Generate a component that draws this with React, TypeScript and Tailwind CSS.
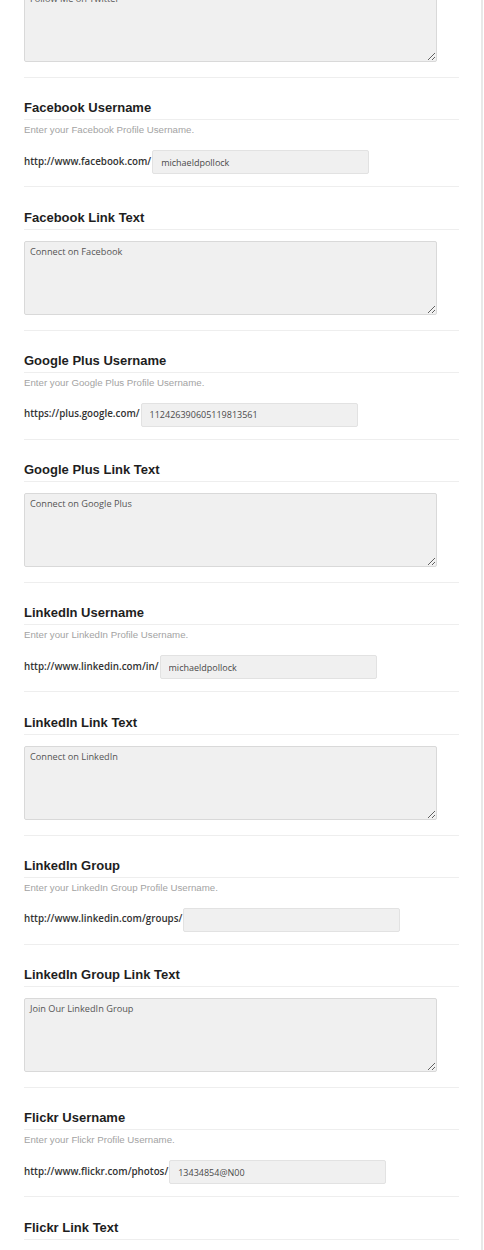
import React from "react";

type Item =
  | { kind: "user"; title: string; desc: string; prefix: string; value: string }
  | { kind: "text"; title: string; value: string };

const items: Item[] = [
  { kind: "user", title: "Facebook Username", desc: "Enter your Facebook Profile Username.", prefix: "http://www.facebook.com/", value: "michaeldpollock" },
  { kind: "text", title: "Facebook Link Text", value: "Connect on Facebook" },
  { kind: "user", title: "Google Plus Username", desc: "Enter your Google Plus Profile Username.", prefix: "https://plus.google.com/", value: "112426390605119813561" },
  { kind: "text", title: "Google Plus Link Text", value: "Connect on Google Plus" },
  { kind: "user", title: "LinkedIn Username", desc: "Enter your LinkedIn Profile Username.", prefix: "http://www.linkedin.com/in/", value: "michaeldpollock" },
  { kind: "text", title: "LinkedIn Link Text", value: "Connect on LinkedIn" },
  { kind: "user", title: "LinkedIn Group", desc: "Enter your LinkedIn Group Profile Username.", prefix: "http://www.linkedin.com/groups/", value: "" },
  { kind: "text", title: "LinkedIn Group Link Text", value: "Join Our LinkedIn Group" },
  { kind: "user", title: "Flickr Username", desc: "Enter your Flickr Profile Username.", prefix: "http://www.flickr.com/photos/", value: "13434854@N00" },
  { kind: "text", title: "Flickr Link Text", value: "" },
];

const heading = "text-[13px] leading-[16px] font-bold text-[#1e1e1e] pb-[3px] border-b border-[#eeeeee] [font-family:'Liberation_Sans',Arial,sans-serif]";

function TextArea({ value }: { value: string }) {
  return (
    <textarea
      defaultValue={value}
      className="block w-[413px] h-[74px] bg-[#f0f0f0] border border-[#d9d9d9] rounded-[2px] px-[5px] py-[3px] text-[9.2px] leading-[13px] text-[#555] outline-none [font-family:'Open_Sans',sans-serif]"
    />
  );
}

function Section({ item, last }: { item: Item; last: boolean }) {
  if (item.kind === "user") {
    return (
      <div className="border-t border-[#eeeeee] pt-[22px] pb-[12px]">
        <div className={heading}>{item.title}</div>
        <div className="mt-[4px] text-[9.7px] leading-[12px] text-[#a3a3a3] [font-family:'Liberation_Sans',Arial,sans-serif]">
          {item.desc}
        </div>
        <div className="mt-[14px] flex items-center">
          <span className="text-[9.8px] font-semibold text-[#333] [font-family:'Open_Sans',sans-serif] whitespace-nowrap">
            {item.prefix}
          </span>
          <input
            defaultValue={item.value}
            className="ml-[1px] w-[217px] h-[24px] bg-[#f0f0f0] border border-[#e2e2e2] rounded-[2px] px-[8px] text-[9px] text-[#4a4a4a] outline-none [font-family:'Open_Sans',sans-serif]"
          />
        </div>
      </div>
    );
  }
  return (
    <div className={"border-t border-[#eeeeee] pt-[22.5px] " + (last ? "pb-[40px]" : "pb-[15px]")}>
      <div className={heading}>{item.title}</div>
      {!last && (
        <div className="mt-[11px]">
          <TextArea value={item.value} />
        </div>
      )}
    </div>
  );
}

export default function App() {
  return (
    <div className="w-[484px] h-[1250px] overflow-hidden bg-white flex">
      <div className="w-[481px] pl-[24px] pr-[22px]">
        <div className="-mt-[12px] pb-[15px]">
          <TextArea value="Follow Me on Twitter" />
        </div>
        {items.map((it, i) => (
          <Section key={i} item={it} last={i === items.length - 1} />
        ))}
      </div>
      <div className="w-[2px] h-full bg-[#e8e8e8]" />
      <div className="w-[1px] h-full bg-white" />
    </div>
  );
}
